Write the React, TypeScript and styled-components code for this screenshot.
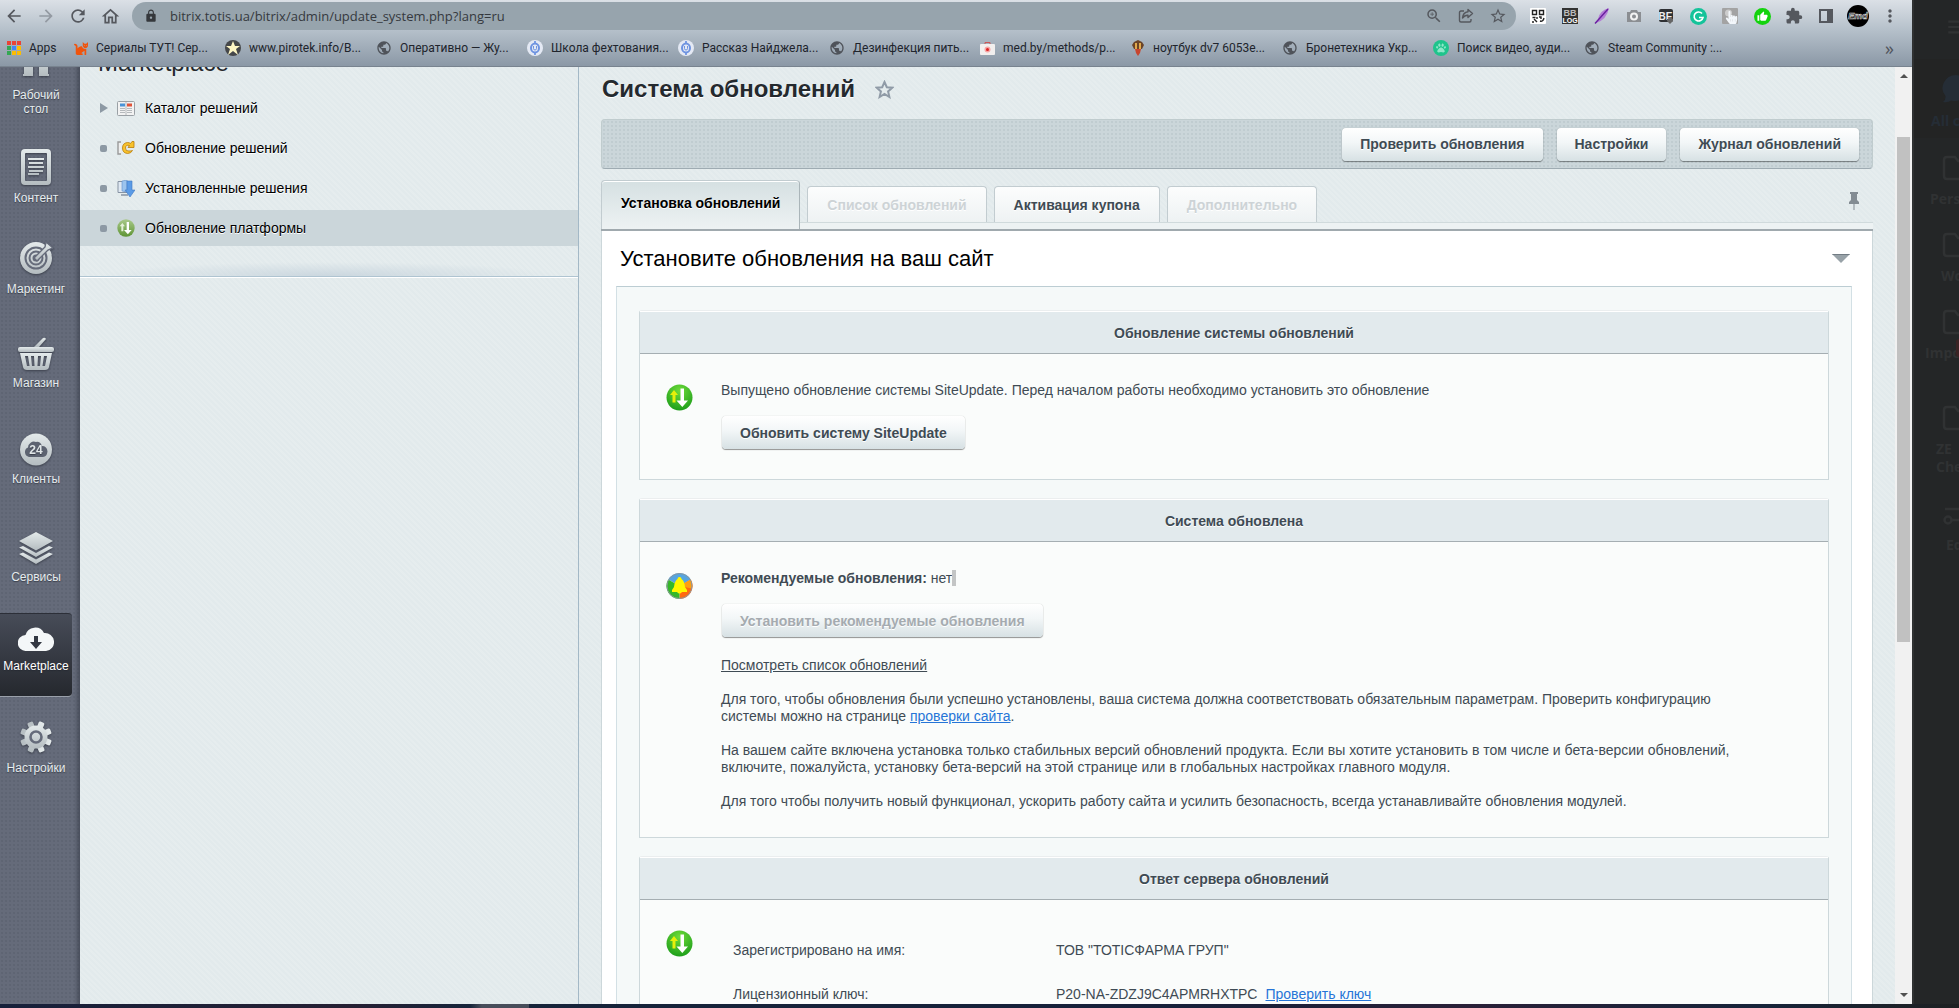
import React from "react";
import styled, { createGlobalStyle, css } from "styled-components";
import {
  MdArrowBack, MdArrowForward, MdRefresh, MdOutlineHome, MdLock, MdZoomIn, MdStarBorder,
  MdExtension, MdMoreVert, MdPublic, MdThumbUp, MdCameraAlt, MdMenu,
} from "react-icons/md";
import { FaCat, FaPaw, FaHandPointer } from "react-icons/fa";

const ui = '"Liberation Sans", Arial, sans-serif';
const chromeFont = '"Open Sans", "Noto Sans", sans-serif';

const GlobalStyle = createGlobalStyle`
  * { box-sizing: border-box; }
  html, body, #root { height: 100%; }
  body { margin: 0; overflow: hidden; background: #232526; font-family: ${ui}; }
  button { font-family: inherit; cursor: pointer; }
  p, h1, h2, h3, ul { margin: 0; padding: 0; }
  svg { display: block; flex: none; }
`;

const Screen = styled.div`
  height: 100vh;
  display: grid;
  grid-template-rows: minmax(0, 1fr) 4px;
`;
const Desktop = styled.div`
  display: grid;
  grid-template-columns: minmax(0, 1fr) 47px;
  min-height: 0;
`;
const Browser = styled.div`
  display: flex;
  flex-direction: column;
  min-width: 0;
  min-height: 0;
`;

/* Browser chrome */
const Chrome = styled.header`
  height: 67px;
  flex: none;
  border-bottom: 1px solid #78838f;
  background: linear-gradient(#dbe0e6 0, #b5c0ca 30px, #8b98a6 66px);
  font-family: ${chromeFont};
`;
const NavRow = styled.div`
  display: flex;
  align-items: center;
  height: 32px;
  padding: 0 12px 0 4px;
  gap: 12px;
`;
const IconButton = styled.button<{ $faded?: boolean }>`
  display: flex;
  align-items: center;
  justify-content: center;
  width: 20px;
  height: 20px;
  padding: 0;
  border: 0;
  background: none;
  color: ${(p) => (p.$faded ? "#939aa2" : "#55585e")};
`;
const AddressBar = styled.form`
  flex: 1;
  display: flex;
  align-items: center;
  height: 28px;
  padding: 0 8px 0 12px;
  gap: 12px;
  border-radius: 14px;
  background: #97a4ad;
  color: #35383c;
`;
const AddressInput = styled.input`
  flex: 1;
  min-width: 0;
  padding: 0;
  border: 0;
  outline: 0;
  background: none;
  font: 13px ${chromeFont};
  color: #35393e;
`;
const Extensions = styled.div`
  display: flex;
  align-items: center;
  gap: 12px;
`;
const BookmarkRow = styled.nav`
  display: flex;
  align-items: center;
  height: 32px;
  padding: 0 18px 0 7px;
`;
const Bookmark = styled.a<{ $short?: boolean }>`
  display: flex;
  align-items: center;
  gap: 8px;
  width: ${(p) => (p.$short ? 67 : 151)}px;
  flex: none;
  font-family: Roboto, sans-serif;
  font-size: 12px;
  color: #20242c;
  text-decoration: none;
  white-space: nowrap;
`;
const MoreBookmarks = styled.button`
  margin-left: auto;
  padding: 0;
  border: 0;
  background: none;
  font: 18px ${chromeFont};
  line-height: 20px;
  color: #50545c;
`;

/* Page */
const Page = styled.div`
  flex: 1;
  min-height: 0;
  display: grid;
  grid-template-columns: 80px 499px minmax(0, 1fr) 17px;
`;
const Rail = styled.nav`
  overflow: hidden;
  min-height: 0;
  color: #e6ecee;
  background:
    linear-gradient(90deg, transparent 74px, rgba(50, 55, 68, 0.55)),
    radial-gradient(rgba(70, 77, 92, 0.22) 1px, transparent 1px) 0 0 / 4px 4px,
    #656b7a;
`;
const RailItem = styled.a<{ $h: number; $gap?: number; $active?: boolean }>`
  display: flex;
  flex-direction: column;
  align-items: center;
  justify-content: flex-end;
  height: ${(p) => p.$h}px;
  gap: ${(p) => p.$gap ?? 6}px;
  width: 72px;
  padding-bottom: 23px;
  font-size: 12px;
  line-height: 14px;
  text-align: center;
  text-decoration: none;
  text-shadow: 0 1px 1px rgba(30, 34, 44, 0.6);
  color: inherit;
  ${(p) => p.$active && css`
    margin-top: 6px;
    color: #fff;
    border-radius: 0 4px 4px 0;
    border-top: 1px solid #2c2f38;
    border-bottom: 1px solid #9aa0aa;
    background: linear-gradient(#474c58, #25282e);
  `}
`;

const textured = css`
  background:
    repeating-linear-gradient(45deg, rgba(255, 255, 255, 0.12) 0 2px, transparent 2px 4px),
    #e2eaec;
`;
const MenuPanel = styled.aside`
  ${textured}
  overflow: hidden;
  border-right: 1px solid #a3b8c6;
`;
const MenuHeading = styled.h2`
  height: 25px;
  padding-left: 18px;
  font-size: 24px;
  line-height: 26px;
  font-weight: 400;
  color: #24282d;
  display: flex;
  align-items: flex-end;
  margin-top: -16px;
  margin-bottom: 14px;
`;
const MenuList = styled.ul`
  list-style: none;
  display: flex;
  flex-direction: column;
  gap: 4px;
`;
const MenuLink = styled.a<{ $active?: boolean }>`
  display: grid;
  grid-template-columns: 10px 20px 1fr;
  align-items: center;
  column-gap: 8px;
  height: 36px;
  padding-left: 19px;
  font-size: 14px;
  color: #000;
  text-decoration: none;
  text-shadow: 0 1px #fff;
  background: ${(p) => (p.$active ? "#cbd6da" : "transparent")};
`;
const Bullet = styled.span`
  width: 7px;
  height: 7px;
  margin-left: 1px;
  border-radius: 2px;
  background: #8d99a4;
`;
const Triangle = styled.span`
  border: 5px solid transparent;
  border-left: 8px solid #8d99a4;
  border-right: 0;
  width: 8px;
  margin-left: 1px;
`;
const MenuShade = styled.div`
  height: 31px;
  border-bottom: 1px solid #afc4d1;
  box-shadow: 0 1px #fff;
  background: radial-gradient(ellipse 46% 14px at 50% 100%, #cbd7df, transparent);
`;

const Main = styled.main`
  ${textured}
  overflow: hidden;
  min-height: 0;
  padding: 8px 22px 0;
  color: #3f4b54;
  font-size: 14px;
  line-height: 17px;
`;
const TitleRow = styled.div`
  display: flex;
  align-items: center;
  gap: 20px;
  padding-left: 1px;
  margin-bottom: 16px;
`;
const Title = styled.h1`
  font-size: 24px;
  line-height: 28px;
  color: #24292e;
  text-shadow: 0 1px #fff;
`;
const PlainButton = styled.button`
  padding: 0;
  border: 0;
  background: none;
  color: #8f9aa6;
`;
const Toolbar = styled.div`
  display: flex;
  align-items: center;
  justify-content: flex-end;
  gap: 14px;
  height: 50px;
  padding: 0 13px;
  border: 1px solid #c0ccce;
  border-bottom-color: #9eabb2;
  border-radius: 4px;
  background:
    radial-gradient(rgba(150, 166, 172, 0.2) 1px, transparent 1px) 0 0 / 4px 4px,
    #cbd6da;
`;
const Button = styled.button`
  height: 33px;
  padding: 0 18px;
  border: 0;
  border-radius: 4px;
  background: linear-gradient(#fff, #f2f6f7 45%, #d7e1e4);
  box-shadow: 0 0 1px rgba(0, 0, 0, 0.3), 0 1px 1px rgba(0, 0, 0, 0.4);
  font-size: 14px;
  font-weight: 700;
  color: #3f4b54;
  text-shadow: 0 1px #fff;
  white-space: nowrap;
  &:disabled { color: #a5abb0; cursor: default; }
`;
const Tabs = styled.div`
  display: flex;
  align-items: flex-end;
  gap: 7px;
  height: 42px;
  margin-top: 11px;
`;
const Tab = styled.button<{ $active?: boolean }>`
  height: 36px;
  padding: 0 19px;
  border: 1px solid #c2ccd0;
  border-bottom: 0;
  border-radius: 4px 4px 0 0;
  background: linear-gradient(#fcfdfd, #eef2f3);
  font-size: 14px;
  font-weight: 700;
  color: #3f4b54;
  text-shadow: 0 1px #fff;
  white-space: nowrap;
  &:disabled { color: #cdd3d6; cursor: default; }
  ${(p) => p.$active && css`
    position: relative;
    z-index: 1;
    height: 49px;
    margin-bottom: -7px;
    padding-bottom: 4px;
    border-right-color: #aab5b9;
    box-shadow: inset 0 1px #fff;
    background: linear-gradient(#d5e0e2, #edf2f3);
    color: #000;
  `}
`;
const PinButton = styled(PlainButton)`
  margin-left: auto;
  margin-right: 14px;
  align-self: center;
`;
const TabStrip = styled.div`
  height: 9px;
  border-top: 1px solid #d0dadc;
  border-bottom: 2px solid #a0a9ae;
  background: #edf2f3;
`;
const Panel = styled.section`
  border: solid #ccd7da;
  border-width: 0 1px;
  background: #fff;
`;
const PanelHead = styled.div`
  display: flex;
  align-items: center;
  justify-content: space-between;
  height: 55px;
  padding: 0 22px 0 18px;
`;
const PanelTitle = styled.h2`
  font-size: 22px;
  line-height: 28px;
  font-weight: 400;
  color: #000;
`;
const PanelBody = styled.div`
  display: flex;
  flex-direction: column;
  gap: 18px;
  margin: 0 20px 0 14px;
  padding: 23px 22px;
  border: 1px solid #d3e0e5;
  border-top-color: #bccdd3;
  background: #f5f9f9;
`;
const Box = styled.section`
  border: 1px solid #cdd8db;
  border-top-color: #ebeeef;
  border-radius: 3px 3px 0 0;
  background: #fafcfb;
`;
const BoxTitle = styled.h3`
  height: 43px;
  border-top: 1px solid #fff;
  border-bottom: 1px solid #a5aeb2;
  background: #e2eaed;
  font-size: 14px;
  line-height: 43px;
  text-align: center;
  text-shadow: 0 1px #fff;
`;
const BoxBody = styled.div`
  display: grid;
  grid-template-columns: 27px minmax(0, 1fr);
  column-gap: 28px;
  padding: 28px 80px 27px 26px;
`;
const StatusIcon = styled.div`
  padding-top: 2px;
`;
const Stack = styled.div`
  display: flex;
  flex-direction: column;
  align-items: flex-start;
  gap: 17px;
  ${Button} { margin: 0 1px 3px; }
`;
const Link = styled.a<{ $dark?: boolean }>`
  color: ${(p) => (p.$dark ? "#3f4b54" : "#2675d7")};
  text-decoration: underline;
`;
const Caret = styled.span`
  display: inline-block;
  width: 4px;
  height: 16px;
  background: #c3c5c5;
  vertical-align: top;
`;
const KeyTable = styled.table`
  border-collapse: collapse;
  width: 100%;
  th, td { height: 44px; padding: 0; font-weight: 400; text-align: left; white-space: nowrap; }
  th { width: 335px; padding-left: 12px; }
  a { margin-left: 8px; }
`;

const Scrollbar = styled.div`
  display: flex;
  flex-direction: column;
  align-items: center;
  background: #f1f1f1;
`;
const ScrollArrow = styled.button<{ $down?: boolean }>`
  width: 17px;
  height: 18px;
  padding: 0;
  border: 0;
  background: none;
  color: #505050;
  display: flex;
  align-items: center;
  justify-content: center;
  svg { transform: rotate(${(p) => (p.$down ? 180 : 0)}deg); }
`;
const ScrollSpace = styled.div<{ $grow: number; $thumb?: boolean }>`
  flex: ${(p) => p.$grow} 0 0;
  width: 13px;
  background: ${(p) => (p.$thumb ? "#c1c1c1" : "transparent")};
`;

/* Dimmed messenger window at the right edge */
const Dimmed = styled.aside`
  overflow: hidden;
  border-left: 2px solid #2f3132;
  background: #242627;
  font: 700 14px/18px ${chromeFont};
  color: #303233;
`;
const DimmedMenu = styled.div`
  height: 59px;
  padding: 14px 0 0 31px;
`;
const Folder = styled.div<{ $h: number; $indent: number; $active?: boolean }>`
  position: relative;
  display: flex;
  flex-direction: column;
  gap: 9px;
  height: ${(p) => p.$h}px;
  padding-top: ${(p) => (p.$active ? 16 : 17)}px;
  background: ${(p) => (p.$active ? "#232424" : "transparent")};
  color: ${(p) => (p.$active ? "#252d36" : "#303233")};
  svg { margin-left: 28px; }
  span { display: block; padding-left: ${(p) => p.$indent}px; white-space: nowrap; }
`;
const UnreadBadge = styled.i`
  position: absolute;
  top: 47px;
  right: 0;
  width: 3px;
  height: 18px;
  border-radius: 3px 0 0 3px;
  background: #3a2324;
`;
const Taskbar = styled.footer`
  background: linear-gradient(90deg, #16203a 0, #251f33 18%, #16243a 24%, #474d5a 24.6% 27%, #16243a 27%, #16203a 60%, #2a2038 75%, #16243a 90%, #1e2021);
`;

/* Drawings */
const RailSvg = styled.svg`
  fill: url(#steel);
  filter: drop-shadow(0 1px 1px rgba(30, 34, 44, 0.6));
`;
const Defs = () => (
  <svg width="0" height="0" style={{ position: "absolute" }} aria-hidden="true">
    <defs>
      <linearGradient id="steel" x1="0" y1="0" x2="0" y2="1"><stop stopColor="#e4eaeb" /><stop offset="1" stopColor="#b4bcc0" /></linearGradient>
      <radialGradient id="green" cx=".5" cy=".25" r=".8"><stop stopColor="#6fdc3a" /><stop offset="1" stopColor="#189a18" /></radialGradient>
      <linearGradient id="olive" x1="0" y1="0" x2="0" y2="1"><stop stopColor="#a9c98a" /><stop offset="1" stopColor="#5e9434" /></linearGradient>
    </defs>
  </svg>
);
const HomeIcon = () => (
  <RailSvg width="30" height="30" viewBox="0 0 30 30"><path d="M0 14 15 1l15 13v2h-3v12h1v2H2v-2h1V16H0zM12 30h6V19h-6z" fillRule="evenodd" /></RailSvg>
);
const ContentIcon = () => (
  <RailSvg width="30" height="36" viewBox="0 0 30 36">
    <path fillRule="evenodd" d="M4 0h22a4 4 0 0 1 4 4v28a4 4 0 0 1-4 4H4a4 4 0 0 1-4-4V4a4 4 0 0 1 4-4zm1 4a1 1 0 0 0-1 1v26a1 1 0 0 0 1 1h20a1 1 0 0 0 1-1V5a1 1 0 0 0-1-1z" />
    <path d="M7 9h16v2H7zM8 13h14v2H8zM7 17h16v2H7zM8 21h14v2H8zM7 24h11v2H7z" />
  </RailSvg>
);
const TargetIcon = () => (
  <RailSvg width="34" height="33" viewBox="0 0 34 33">
    <circle cx="17" cy="17" r="16" />
    <g fill="none" stroke="#656b7a" strokeWidth="2"><circle cx="17" cy="17" r="10.5" /><circle cx="17" cy="17" r="6.5" /><circle cx="17" cy="17" r="2.5" /></g>
    <path d="M15 17 26 6l1-5 7 6-5 2-11 11z" stroke="#656b7a" strokeWidth="1.4" />
  </RailSvg>
);
const BasketIcon = () => (
  <RailSvg width="36" height="33" viewBox="0 0 36 33">
    <path d="m16 10 9-9q2-1 3 1l-7 8z" /><rect y="10" width="36" height="5" rx="2" />
    <path fillRule="evenodd" d="M2 16h32l-3 14q-.5 3-4 3H9q-3.500 0-4-3zm5 3 2 10h2.500L10 19zm6 0 1 10h2.500L16 19zm7 0-.5 10H22l1-10zm6 0-1.500 10H27l2-10z" />
  </RailSvg>
);
const ClientsIcon = () => (
  <RailSvg width="32" height="33" viewBox="0 0 32 33">
    <circle cx="16" cy="16.5" r="16" />
    <path d="M9 24a5 5 0 0 1-1-9.500 6 6 0 0 1 8-5.500q4-1 6 4 5 0 5.500 5.500Q27 23.500 23 24z" fill="#5d6371" />
    <text x="16" y="21" textAnchor="middle" fontSize="12" fontWeight="700" fill="#e0e6e8" fontFamily={ui}>24</text>
  </RailSvg>
);
const LayersIcon = () => (
  <RailSvg width="34" height="32" viewBox="0 0 34 32">
    <path d="M17 0 34 9 17 18.500 0 9z" /><path d="m0 15.500 4-1.500 13 7 13-7 4 1.500L17 25z" /><path d="m0 22 4-1.500 13 7 13-7 4 1.500L17 32z" />
  </RailSvg>
);
const CloudIcon = () => (
  <svg width="36" height="25" viewBox="0 0 36 25" aria-hidden="true">
    <path fill="#f4f7f8" d="M8 25a8 8 0 0 1-.5-16A10 10 0 0 1 26 7a9 9 0 0 1 2 18z" />
    <path fill="#333842" d="M16 10h4v6h4l-6 7-6-7h4z" />
  </svg>
);
const GearIcon = () => (
  <RailSvg width="32" height="32" viewBox="0 0 32 32">
    {[22, 67, 112, 157].map((a) => <rect key={a} x="13" y="0" width="6" height="32" rx="1.5" transform={`rotate(${a} 16 16)`} />)}
    <circle cx="16" cy="16" r="11.5" /><circle cx="16" cy="16" r="5.5" fill="none" stroke="#656b7a" strokeWidth="2.6" />
  </RailSvg>
);
const UpdateIcon = ({ size, muted }: { size: number; muted?: boolean }) => (
  <svg width={size} height={size} viewBox="0 0 27 27" aria-hidden="true">
    <circle cx="13.5" cy="13.5" r="13" fill={muted ? "url(#olive)" : "url(#green)"} />
    <path d="M14.500 4.500h3.500v12h4l-5.700 6.500-5.800-6.500h4z" fill="#fff" />
    <path d="M6.500 18.500v-7.500H4l4-5 4 5H9.500v7.500z" fill={muted ? "#e5f0d8" : "#e6f00a"} />
  </svg>
);
const AlertIcon = () => (
  <svg width="27" height="28" viewBox="0 0 27 28" aria-hidden="true">
    <path d="M13.500 14 2.200 7.500a13 13 0 0 1 22.600 0z" fill="#55a5e0" />
    <path d="M13.500 14 24.800 7.500a13 13 0 0 1-11.300 19.500z" fill="#ff6a10" />
    <path d="M13.500 14 24.800 7.500a13 13 0 0 1 1 9z" fill="#ffa010" />
    <path d="M13.500 14v13A13 13 0 0 1 2.200 7.500z" fill="#35b828" />
    <circle cx="13.5" cy="14" r="12.5" fill="none" stroke="#8a97a0" strokeWidth="1" />
    <path d="M13.500 5q2 0 2 2 3 2 3.500 8l2 3v2h-5q-2.500 3-5 0H6v-2l2-3q.5-6 3.500-8 0-2 2-2z" fill="#fff700" />
  </svg>
);
const CatalogIcon = () => (
  <svg width="18" height="15" viewBox="0 0 18 15" aria-hidden="true">
    <rect x=".5" y=".5" width="17" height="14" rx="1" fill="#f2f2f2" stroke="#9aa0a5" />
    <path d="M3 2.500h5v3H3z" fill="#4a93d6" /><path d="M10 2.500h5v3h-5z" fill="#e0543a" />
    <path d="M3 7.500h5M3 9.500h5M3 11.500h5M10 7.500h5M10 9.500h5M10 11.500h5M9 1v13" stroke="#b5b9bc" />
  </svg>
);
const RenewIcon = () => (
  <svg width="18" height="16" viewBox="0 0 18 16" aria-hidden="true">
    <path d="M4 2H1v12h3" fill="#eee" stroke="#9a9a9a" strokeWidth="1.4" />
    <path d="M15.500 10.500q-1.500 3-5 3Q5.500 13 5.500 8t5-5.500q2 0 3 1L15 1.500h2v6h-6l1.500-2q-4-1-4 2.500t3.500 3q2 0 3.500-.5z" fill="#f8c22c" stroke="#b97c0a" strokeWidth=".8" />
  </svg>
);
const InstalledIcon = () => (
  <svg width="18" height="17" viewBox="0 0 18 17" aria-hidden="true">
    <path d="M1 1.500h12v11H1z" fill="#dfe8f2" stroke="#8793a3" /><path d="M4 15h7" stroke="#8793a3" strokeWidth="1.5" />
    <path d="M5 1 10 0v12l-5-1z" fill="#9cc4ee" stroke="#5f8fca" strokeWidth=".6" />
    <path d="M10 1h5v9h3l-5 7-5-7h2z" fill="#5b9be6" stroke="#3f78c4" strokeWidth=".6" />
  </svg>
);
const PinIcon = () => (
  <svg width="10" height="18" viewBox="0 0 10 18" fill="#838c93" aria-hidden="true">
    <path d="M1 0h8v2H8v6l2 2v2H0v-2l2-2V2H1z" /><path d="M4.500 12h1v6h-1z" />
  </svg>
);
const ShareIcon = () => (
  <svg width="16" height="16" viewBox="0 0 16 16" fill="none" stroke="currentColor" strokeWidth="1.4" strokeLinejoin="round" aria-hidden="true">
    <path d="M6 3H3q-1.500 0-1.500 1.500v8Q1.500 14 3 14h8.500q1.500 0 1.500-1.500V11" />
    <path d="M10 1.500 14.500 5.500 10 9.500V7.200Q6.500 7 4.500 10 5 4.500 10 3.800z" />
  </svg>
);
const AppsIcon = () => (
  <svg width="14" height="14" viewBox="0 0 14 14" aria-hidden="true">
    {["#ea4335", "#ea4335", "#ea4335", "#34a853", "#4285f4", "#fbbc04", "#34a853", "#fbbc04", "#fbbc04"].map((c, i) => (
      <rect key={i} x={(i % 3) * 5} y={Math.floor(i / 3) * 5} width="4" height="4" fill={c} />
    ))}
  </svg>
);
const StarBadge = () => (
  <svg width="16" height="16" viewBox="0 0 16 16" aria-hidden="true"><circle cx="8" cy="8" r="8" fill="#45474a" /><path d="m8 1 2 5h5l-4 3 2 6-5-4-5 4 2-6-4-3h5z" fill="#fdf6c4" /></svg>
);
const EmblemIcon = () => (
  <svg width="16" height="16" viewBox="0 0 16 16" aria-hidden="true"><circle cx="8" cy="8" r="8" fill="#e4e9f4" /><path d="M8 1v14" stroke="#7d9fe4" strokeWidth="2" /><ellipse cx="8" cy="8" rx="4" ry="4.5" fill="#e4e9f4" stroke="#6e93e0" strokeWidth="2" /><path d="M6.500 6v2.500a1.500 1.500 0 0 0 3 0V6" fill="none" stroke="#6e93e0" /></svg>
);
const MedIcon = () => (
  <svg width="15" height="13" viewBox="0 0 15 13" aria-hidden="true"><path d="M5 2V.5h5V2" fill="none" stroke="#c55" /><rect y="2" width="15" height="11" rx="1" fill="#f2efee" /><circle cx="7.5" cy="7.5" r="3" fill="#f6a6a6" /><circle cx="7.5" cy="7.5" r="1.5" fill="#d22" /></svg>
);
const CrestIcon = () => (
  <svg width="14" height="16" viewBox="0 0 14 16" aria-hidden="true"><path d="m1 5 2-3 4-2 4 2 2 3-2 4H3z" fill="#6b4428" /><path d="M4 3h2v6H4zM8 3h2v6H8z" fill="#e0a94c" /><path d="M4 9h6l-1 4-2 3-2-3z" fill="#c8452e" /></svg>
);
const PawBadge = () => (
  <svg width="16" height="16" viewBox="0 0 16 16" aria-hidden="true"><circle cx="8" cy="8" r="8" fill="#1fc48c" /><FaPaw x="3" y="3" size={10} color="#8fe6c8" /></svg>
);
const QrIcon = () => (
  <svg width="16" height="16" viewBox="0 0 16 16" aria-hidden="true"><rect width="16" height="16" rx="1" fill="#fff" /><path d="M2.500 2.500h4v4h-4zM9.500 2.500h4v4h-4zM2.500 9.500h3M4 11l3 3M2 14h2M7 9v2M9 9h2v2M10 13q3 1 4-3" fill="none" stroke="#222" strokeWidth="1.4" /></svg>
);
const BbIcon = () => (
  <svg width="16" height="16" viewBox="0 0 16 16" aria-hidden="true"><rect width="16" height="16" fill="#333" /><text x="8" y="8" textAnchor="middle" fontSize="9" fontWeight="700" fill="#bbb" fontFamily={ui}>BB</text><text x="8" y="15" textAnchor="middle" fontSize="7" fontWeight="700" fill="#fff" fontFamily={ui}>LOG</text></svg>
);
const FeatherIcon = () => (
  <svg width="16" height="16" viewBox="0 0 16 16" aria-hidden="true"><path d="M15 0Q5 3 4 11l-3 4.500Q13 12 15 0z" fill="#b47fd6" /><path d="M14 1 1 15.500" stroke="#6a1fa0" strokeWidth="1.4" /></svg>
);
const CameraIcon = () => (
  <svg width="16" height="16" viewBox="0 0 16 16" aria-hidden="true"><path d="M1 4h3l1-2h6l1 2h3v10H1z" fill="#8b8e92" /><circle cx="8" cy="8.500" r="3" fill="none" stroke="#f2f2f2" strokeWidth="2" /></svg>
);
const BeIcon = () => (
  <svg width="16" height="16" viewBox="0 0 16 16" aria-hidden="true"><rect x="1" y="1" width="14" height="13" rx="2" fill="#2e3033" /><text x="7.5" y="12" textAnchor="middle" fontSize="10" fontWeight="700" fill="#eee" fontFamily={ui}>BE</text><path d="M9 11h6v2l-3 3-3-3z" fill="#666" /></svg>
);
const GIcon = () => (
  <svg width="17" height="17" viewBox="0 0 17 17" aria-hidden="true"><circle cx="8.5" cy="8.5" r="8.5" fill="#15c39a" /><path d="M12 5.500a4.500 4.500 0 1 0 1 4H9" fill="none" stroke="#fff" strokeWidth="1.6" /></svg>
);
const HandBadge = () => (
  <svg width="16" height="16" viewBox="0 0 16 16" aria-hidden="true"><rect width="16" height="16" rx="1" fill="#a3a3a3" /><circle cx="6.500" cy="5" r="3.500" fill="#ccc" /><FaHandPointer x="3" y="3" size={13} color="#f3f7fb" /></svg>
);
const ThumbBadge = () => (
  <svg width="17" height="17" viewBox="0 0 17 17" aria-hidden="true"><circle cx="8.5" cy="8.5" r="8.5" fill="#14d30d" /><MdThumbUp x="3" y="3" size={11} color="#fff" /></svg>
);
const PanelIcon = () => (
  <svg width="14" height="14" viewBox="0 0 14 14" aria-hidden="true"><rect x="1" y="1" width="12" height="12" fill="none" stroke="#55585e" strokeWidth="2" /><path d="M8 1h5v12H8z" fill="#55585e" /></svg>
);
const AvatarIcon = () => (
  <svg width="22" height="22" viewBox="0 0 22 22" aria-hidden="true"><circle cx="11" cy="11" r="11" fill="#000" /><text x="11" y="14" textAnchor="middle" fontSize="9" fontWeight="700" fontStyle="italic" fill="#000" stroke="#ddd" strokeWidth=".6" fontFamily={ui}>Emd</text></svg>
);
const StarIcon = () => (
  <svg width="19" height="19" viewBox="0 0 19 19" aria-hidden="true"><path d="m9.500 2 2.300 5.200 5.500.5-4.200 3.700 1.300 5.600-4.900-3-4.900 3 1.300-5.600L1.700 7.700l5.500-.5z" fill="none" stroke="#909ba7" strokeWidth="2" /></svg>
);
const CollapseIcon = () => (
  <svg width="18" height="9" viewBox="0 0 18 9" aria-hidden="true"><path d="M0 0h18L9 9z" fill="#98a2a8" /><path d="M0 0h18l-1 1H1z" fill="#727c84" /></svg>
);
const ArrowUp = () => <svg width="8" height="4" viewBox="0 0 8 4" aria-hidden="true"><path d="M4 0 8 4H0z" fill="currentColor" /></svg>;
const FolderIcon = () => (
  <svg width="26" height="26" viewBox="0 0 26 26" fill="none" stroke="currentColor" strokeWidth="2.5" aria-hidden="true"><path d="M5 2h8l3 4h8v18H5q-3 0-3-3V5q0-3 3-3z" /></svg>
);
const ChatIcon = () => (
  <svg width="28" height="28" viewBox="0 0 28 28" aria-hidden="true"><path d="M14 0a14 13 0 1 1-5 25.500Q6 28 1 27q3-2 2.500-6A14 13 0 0 1 14 0z" fill="currentColor" /></svg>
);
const SlidersIcon = () => (
  <svg width="26" height="26" viewBox="0 0 26 26" fill="none" stroke="currentColor" strokeWidth="2.5" aria-hidden="true"><path d="M3 8h20M10 19h14" /><circle cx="6" cy="19" r="3.5" /></svg>
);
const Globe = () => <MdPublic size={16} color="#4f535a" />;

const bookmarks: [React.ReactNode, string][] = [
  [<FaCat size={14} color="#f0540c" />, "Сериалы ТУТ! Сер..."],
  [<StarBadge />, "www.pirotek.info/В..."],
  [<Globe />, "Оперативно — Жу..."],
  [<EmblemIcon />, "Школа фехтования..."],
  [<EmblemIcon />, "Рассказ Найджела..."],
  [<Globe />, "Дезинфекция пить..."],
  [<MedIcon />, "med.by/methods/p..."],
  [<CrestIcon />, "ноутбук dv7 6053e..."],
  [<Globe />, "Бронетехника Укр..."],
  [<PawBadge />, "Поиск видео, ауди..."],
  [<Globe />, "Steam Community :..."],
];
const extensions: [string, React.ReactNode][] = [
  ["QR", <QrIcon />], ["BB", <BbIcon />], ["Feather", <FeatherIcon />],
  ["Camera", <CameraIcon />], ["BE", <BeIcon />], ["G", <GIcon />],
  ["Pointer", <HandBadge />], ["Like", <ThumbBadge />], ["Extensions", <MdExtension size={18} />],
  ["Side panel", <PanelIcon />], ["Profile", <AvatarIcon />], ["Menu", <MdMoreVert size={20} />],
];
const menu: [React.ReactNode, string][] = [
  [<CatalogIcon />, "Каталог решений"],
  [<RenewIcon />, "Обновление решений"],
  [<InstalledIcon />, "Установленные решения"],
  [<UpdateIcon size={18} muted />, "Обновление платформы"],
];

export default function App() {
  return (
    <Screen>
      <GlobalStyle />
      <Defs />
      <Desktop>
        <Browser>
          <Chrome>
            <NavRow>
              <IconButton aria-label="Back"><MdArrowBack size={20} /></IconButton>
              <IconButton aria-label="Forward" $faded><MdArrowForward size={20} /></IconButton>
              <IconButton aria-label="Reload"><MdRefresh size={20} /></IconButton>
              <IconButton aria-label="Home"><MdOutlineHome size={21} /></IconButton>
              <AddressBar onSubmit={(e) => e.preventDefault()}>
                <MdLock size={14} />
                <AddressInput aria-label="Address" defaultValue="bitrix.totis.ua/bitrix/admin/update_system.php?lang=ru" />
                <IconButton type="button" aria-label="Zoom"><MdZoomIn size={18} /></IconButton>
                <IconButton type="button" aria-label="Share"><ShareIcon /></IconButton>
                <IconButton type="button" aria-label="Bookmark"><MdStarBorder size={18} /></IconButton>
              </AddressBar>
              <Extensions>
                {extensions.map(([name, icon]) => <IconButton key={name} aria-label={name}>{icon}</IconButton>)}
              </Extensions>
            </NavRow>
            <BookmarkRow>
              <Bookmark href="#" $short><AppsIcon />Apps</Bookmark>
              {bookmarks.map(([icon, label]) => <Bookmark href="#" key={label}>{icon}{label}</Bookmark>)}
              <MoreBookmarks aria-label="More bookmarks">»</MoreBookmarks>
            </BookmarkRow>
          </Chrome>
          <Page>
            <Rail>
              <RailItem href="#" $h={72} $gap={12}><HomeIcon /><span>Рабочий<br />стол</span></RailItem>
              <RailItem href="#" $h={89}><ContentIcon />Контент</RailItem>
              <RailItem href="#" $h={91} $gap={8}><TargetIcon />Маркетинг</RailItem>
              <RailItem href="#" $h={94}><BasketIcon />Магазин</RailItem>
              <RailItem href="#" $h={96}><ClientsIcon />Клиенты</RailItem>
              <RailItem href="#" $h={98}><LayersIcon />Сервисы</RailItem>
              <RailItem href="#" $h={84} $gap={8} $active><CloudIcon />Marketplace</RailItem>
              <RailItem href="#" $h={101} $gap={8}><GearIcon />Настройки</RailItem>
            </Rail>
            <MenuPanel>
              <MenuHeading>Marketplace</MenuHeading>
              <MenuList>
                {menu.map(([icon, label], i) => (
                  <li key={label}>
                    <MenuLink href="#" $active={i === 3}>{i === 0 ? <Triangle /> : <Bullet />}{icon}{label}</MenuLink>
                  </li>
                ))}
              </MenuList>
              <MenuShade />
            </MenuPanel>
            <Main>
              <TitleRow>
                <Title>Система обновлений</Title>
                <PlainButton aria-label="В избранное"><StarIcon /></PlainButton>
              </TitleRow>
              <Toolbar>
                <Button>Проверить обновления</Button>
                <Button>Настройки</Button>
                <Button>Журнал обновлений</Button>
              </Toolbar>
              <Tabs>
                <Tab $active>Установка обновлений</Tab>
                <Tab disabled>Список обновлений</Tab>
                <Tab>Активация купона</Tab>
                <Tab disabled>Дополнительно</Tab>
                <PinButton aria-label="Закрепить"><PinIcon /></PinButton>
              </Tabs>
              <TabStrip />
              <Panel>
                <PanelHead>
                  <PanelTitle>Установите обновления на ваш сайт</PanelTitle>
                  <PlainButton aria-label="Свернуть"><CollapseIcon /></PlainButton>
                </PanelHead>
                <PanelBody>
                  <Box>
                    <BoxTitle>Обновление системы обновлений</BoxTitle>
                    <BoxBody>
                      <StatusIcon><UpdateIcon size={27} /></StatusIcon>
                      <Stack>
                        <p>Выпущено обновление системы SiteUpdate. Перед началом работы необходимо установить это обновление</p>
                        <Button>Обновить систему SiteUpdate</Button>
                      </Stack>
                    </BoxBody>
                  </Box>
                  <Box>
                    <BoxTitle>Система обновлена</BoxTitle>
                    <BoxBody>
                      <StatusIcon><AlertIcon /></StatusIcon>
                      <Stack>
                        <p><b>Рекомендуемые обновления:</b> нет<Caret /></p>
                        <Button disabled>Установить рекомендуемые обновления</Button>
                        <Link href="#" $dark>Посмотреть список обновлений</Link>
                        <p>Для того, чтобы обновления были успешно установлены, ваша система должна соответствовать обязательным параметрам. Проверить конфигурацию системы можно на странице <Link href="#">проверки сайта</Link>.</p>
                        <p>На вашем сайте включена установка только стабильных версий обновлений продукта. Если вы хотите установить в том числе и бета-версии обновлений, включите, пожалуйста, установку бета-версий на этой странице или в глобальных настройках главного модуля.</p>
                        <p>Для того чтобы получить новый функционал, ускорить работу сайта и усилить безопасность, всегда устанавливайте обновления модулей.</p>
                      </Stack>
                    </BoxBody>
                  </Box>
                  <Box>
                    <BoxTitle>Ответ сервера обновлений</BoxTitle>
                    <BoxBody>
                      <StatusIcon><UpdateIcon size={27} /></StatusIcon>
                      <KeyTable>
                        <tbody>
                          <tr><th scope="row">Зарегистрировано на имя:</th><td>ТОВ "ТОТІСФАРМА ГРУП"</td></tr>
                          <tr><th scope="row">Лицензионный ключ:</th><td>P20-NA-ZDZJ9C4APMRHXTPC<Link href="#">Проверить ключ</Link></td></tr>
                        </tbody>
                      </KeyTable>
                    </BoxBody>
                  </Box>
                </PanelBody>
              </Panel>
            </Main>
            <Scrollbar>
              <ScrollArrow aria-label="Вверх"><ArrowUp /></ScrollArrow>
              <ScrollSpace $grow={52} />
              <ScrollSpace $grow={505} $thumb />
              <ScrollSpace $grow={344} />
              <ScrollArrow $down aria-label="Вниз"><ArrowUp /></ScrollArrow>
            </Scrollbar>
          </Page>
        </Browser>
        <Dimmed>
          <DimmedMenu><MdMenu size={26} /></DimmedMenu>
          <Folder $h={79} $indent={17} $active><ChatIcon /><span>All c</span></Folder>
          <Folder $h={77} $indent={16}><FolderIcon /><span>Pers</span></Folder>
          <Folder $h={77} $indent={27}><FolderIcon /><span>Wo</span></Folder>
          <Folder $h={96} $indent={11}><FolderIcon /><UnreadBadge /><span>Impo</span></Folder>
          <Folder $h={96} $indent={22}><FolderIcon /><span>ZE<br />Che</span></Folder>
          <Folder $h={77} $indent={32}><SlidersIcon /><span>Ed</span></Folder>
        </Dimmed>
      </Desktop>
      <Taskbar />
    </Screen>
  );
}
